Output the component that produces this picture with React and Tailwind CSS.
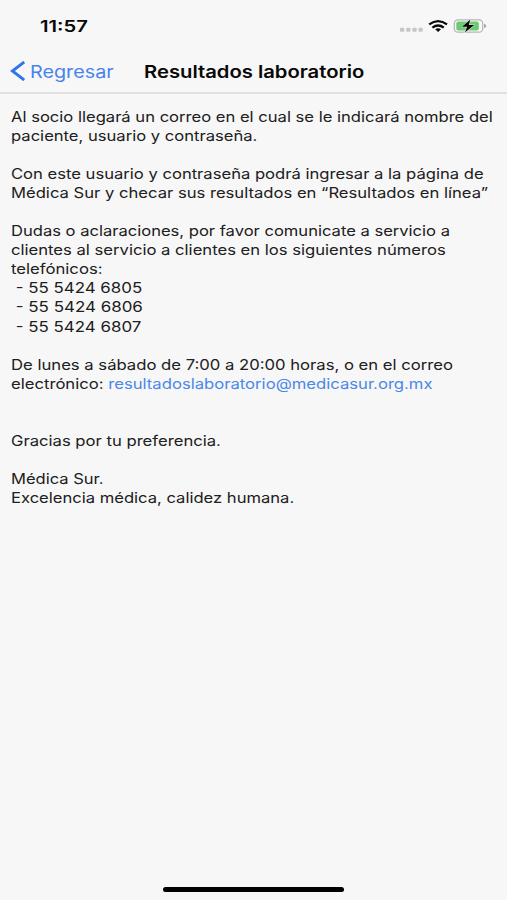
import { useLayoutEffect, useRef, useState } from "react";

// One line of text, widened horizontally to fill the given width.
function Line({ width, className = "", children }) {
  const ref = useRef(null);
  const [scale, setScale] = useState(1.15);
  useLayoutEffect(() => {
    const fit = () => setScale(width / ref.current.offsetWidth);
    fit();
    document.fonts?.ready.then(fit);
  }, [width]);
  return (
    <span
      ref={ref}
      className={`block w-max origin-left whitespace-pre ${className}`}
      style={{ transform: `scaleX(${scale})` }}
    >
      {children}
    </span>
  );
}

const paragraphs = [
  [
    ["Al socio llegará un correo en el cual se le indicará nombre del", 481.5],
    ["paciente, usuario y contraseña.", 246],
  ],
  [
    ["Con este usuario y contraseña podrá ingresar a la página de", 472.5],
    ["Médica Sur y checar sus resultados en “Resultados en línea”", 476.5],
  ],
  [
    ["Dudas o aclaraciones, por favor comunicate a servicio a", 439],
    ["clientes al servicio a clientes en los siguientes números", 435],
    ["telefónicos:", 91],
    [" - 55 5424 6805", 131],
    [" - 55 5424 6806", 131.5],
    [" - 55 5424 6807", 130],
  ],
];

function StatusIcons() {
  return (
    <svg width="90" height="20" viewBox="0 0 90 20" className="block">
      <g fill="#c6c6c8">
        <rect x="3" y="11.8" width="4.3" height="3.9" rx="1" />
        <rect x="9.2" y="11.8" width="4.3" height="3.9" rx="1" />
        <rect x="15.4" y="11.8" width="4.3" height="3.9" rx="1" />
        <rect x="21.5" y="11.8" width="4.3" height="3.9" rx="1" />
      </g>
      <g fill="none" stroke="#080808" strokeWidth="2.3">
        <path d="M32.2 8.4 Q41.1 1.8 50 8.4" />
        <path d="M35.4 11.6 Q41.1 7.3 46.8 11.6" />
      </g>
      <path d="M38.2 13.3 Q41.1 11.4 44 13.3 L41.1 15.9Z" fill="#080808" />
      <rect x="57.3" y="3.8" width="28.4" height="12.4" rx="3.7" fill="#fafafa" stroke="#b4b4b6" strokeWidth="1.2" />
      <rect x="59.3" y="5.6" width="22.5" height="8.8" rx="2" fill="#69cb72" />
      <path d="M87 7.8 Q89.3 8.6 89.3 10 Q89.3 11.4 87 12.2Z" fill="#a9a9ab" />
      <path d="M73.4 3.6 L64.9 10.7 L70.1 10.7 L67.9 16.6 L77.3 9.1 L71.8 9.1 Z" fill="#080808" stroke="#f7f7f7" strokeWidth="1" paintOrder="stroke" />
    </svg>
  );
}

export default function App() {
  return (
    <div className="flex h-[900px] w-[507px] flex-col overflow-hidden bg-[#f7f7f7] font-['Inter','Liberation_Sans',sans-serif] text-[#202020]">
      <header className="h-[94px] shrink-0 border-b-2 border-[#e1e1e2]">
        <div className="flex h-[51px] items-start justify-between pl-[39.5px] pr-[20px] pt-[16px]">
          <Line width={48} className="text-[16px] leading-5 font-semibold text-[#080808]">11:57</Line>
          <StatusIcons />
        </div>
        <nav className="flex h-10 items-center pl-[10px] text-[17.2px]">
          <svg width="15" height="20" viewBox="0 0 15 20" className="mr-[4.5px] shrink-0" fill="none" stroke="#2f76ec" strokeWidth="2.9">
            <path d="M14.2 1 L2.4 10 L14.2 19" />
          </svg>
          <div className="w-[114.5px] pt-px">
            <Line width={84} className="text-[#4783ed]">Regresar</Line>
          </div>
          <Line width={220} className="pt-px font-semibold text-[#080808]">Resultados laboratorio</Line>
        </nav>
      </header>
      <main className="flex grow flex-col gap-[19.05px] pl-[10.5px] pt-[13px] text-[14.3px] leading-[19.05px]">
        {paragraphs.map((lines, i) => (
          <p key={i}>
            {lines.map(([text, width]) => (
              <Line key={text} width={width}>{text}</Line>
            ))}
          </p>
        ))}
        <p>
          <Line width={441.5}>De lunes a sábado de 7:00 a 20:00 horas, o en el correo</Line>
          <Line width={421.5}>
            electrónico: <a className="text-[#4b88e8]">resultadoslaboratorio@medicasur.org.mx</a>
          </Line>
        </p>
        <p className="mt-[19.05px]">
          <Line width={209.5}>Gracias por tu preferencia.</Line>
        </p>
        <p>
          <Line width={92.5}>Médica Sur.</Line>
          <Line width={283}>Excelencia médica, calidez humana.</Line>
        </p>
      </main>
      <footer className="flex justify-center pb-[8px]">
        <div className="h-[5px] w-[181px] rounded-full bg-black" />
      </footer>
    </div>
  );
}
